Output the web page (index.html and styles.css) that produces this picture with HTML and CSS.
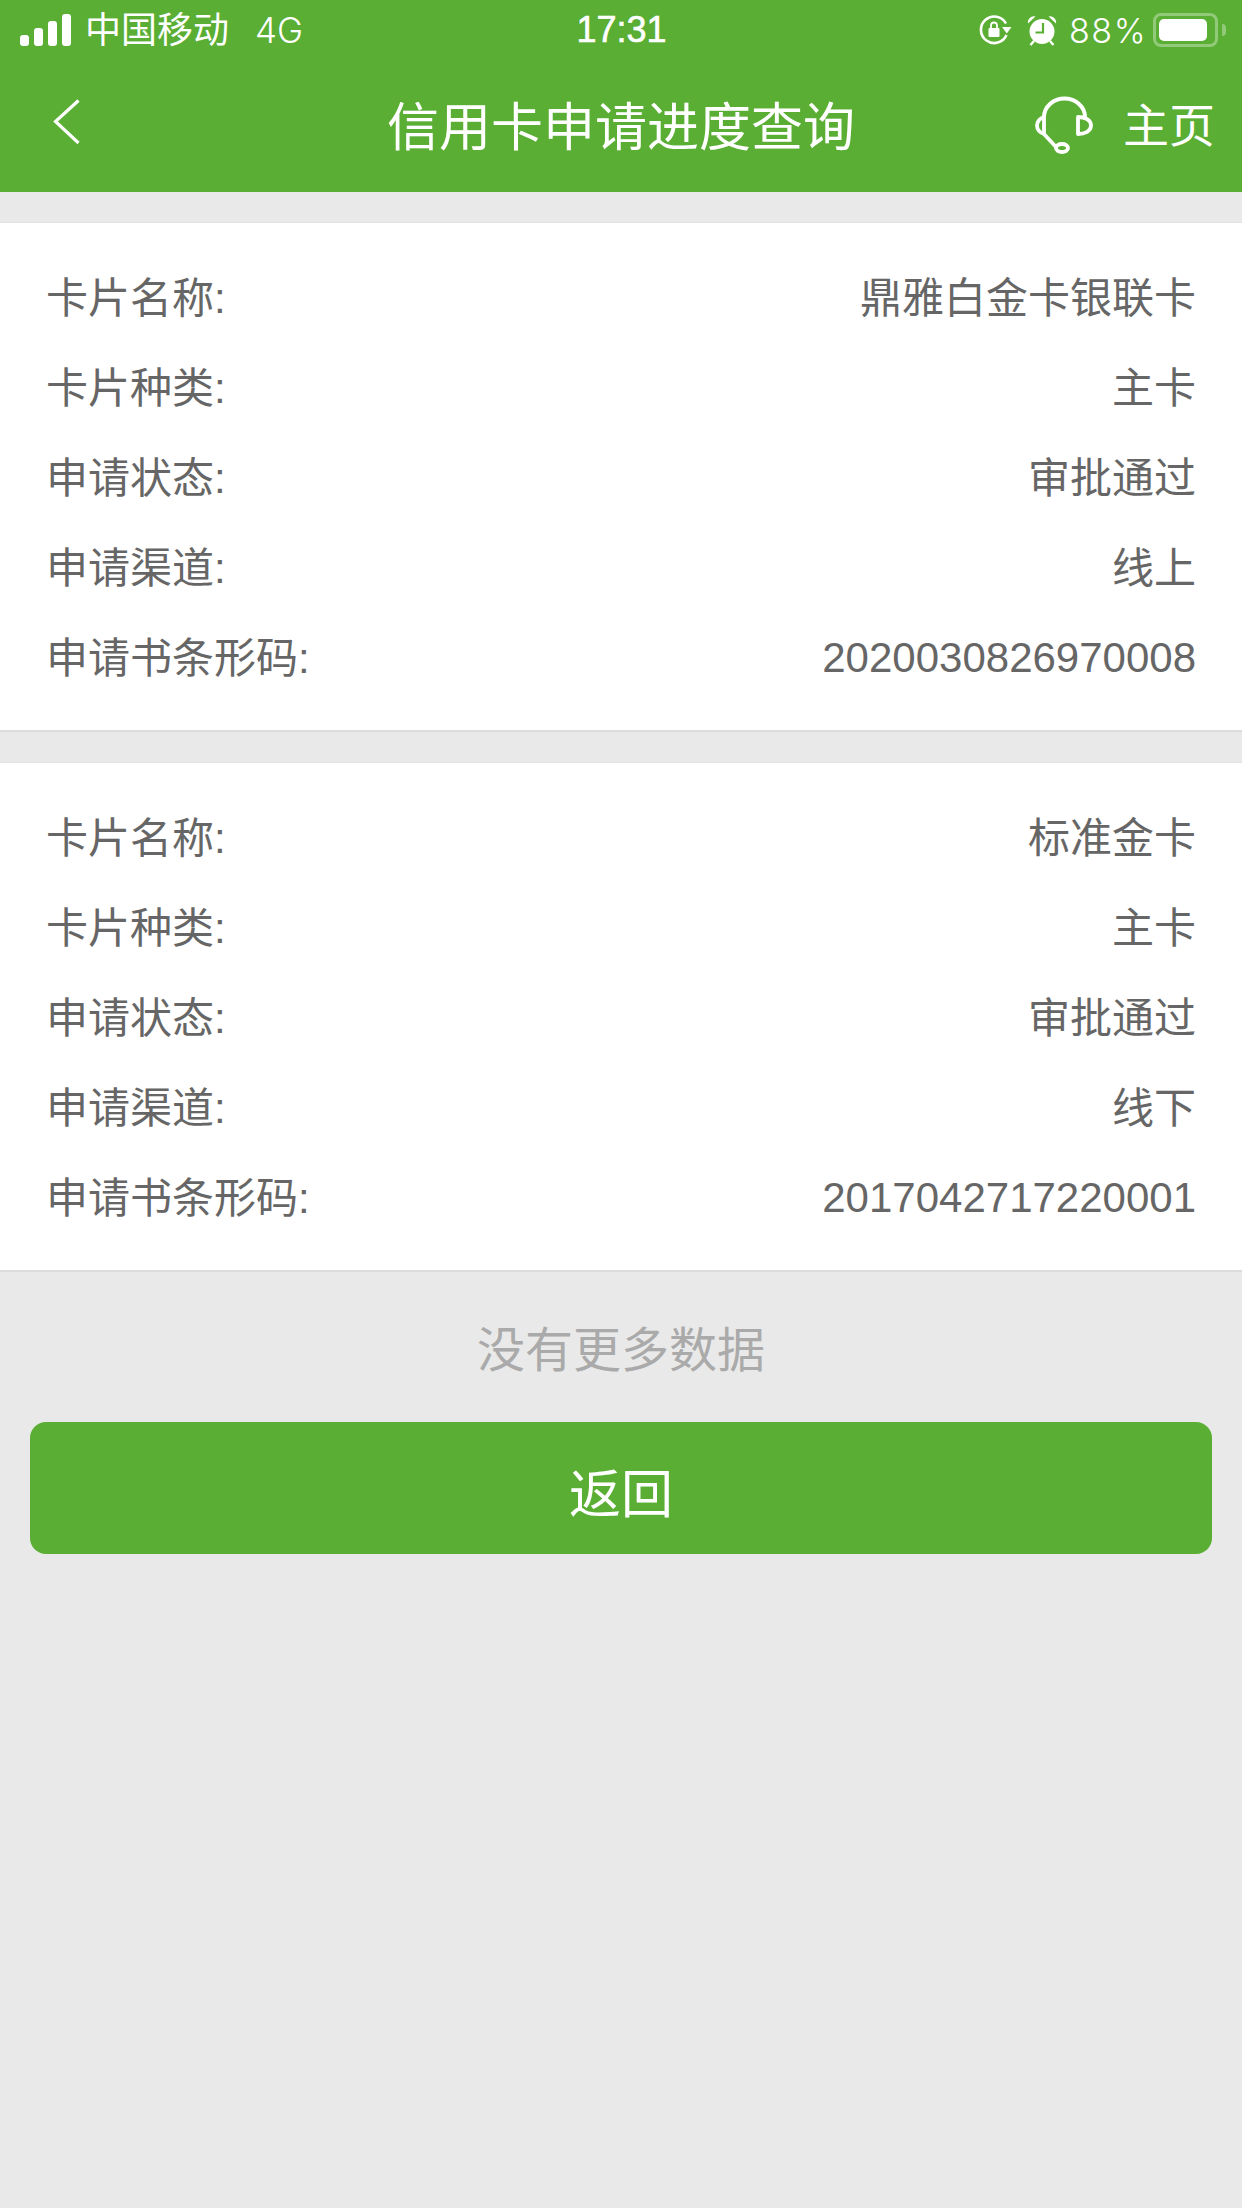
FILE: index.html

```html
<!DOCTYPE html>
<html lang="zh-CN">
<head>
  <meta charset="UTF-8" />
  <meta name="viewport" content="width=device-width, initial-scale=1.0"/>
  <title>信用卡申请进度查询</title>
  <link rel="stylesheet" href="styles.css">
</head>
<body>
  <header class="top">
    <div class="status">
      <div class="status-left">
        <svg class="signal" width="54" height="32" viewBox="0 0 54 32">
          <rect x="0" y="21" width="9" height="11" rx="3"/>
          <rect x="14" y="14" width="9" height="18" rx="3"/>
          <rect x="28" y="7" width="9" height="25" rx="3"/>
          <rect x="42" y="0" width="9" height="32" rx="3"/>
        </svg>
        <span class="carrier">中国移动</span>
        <span class="net">4G</span>
      </div>
      <div class="clock">17:31</div>
      <div class="status-right">
        <svg class="lock" width="33" height="30" viewBox="0 0 33 30">
          <path d="M27 8.500A13.300 13.300 0 1 0 27.500 20" fill="none" stroke="#fff" stroke-width="2.600"/>
          <path d="M23 12h9.500l-4.700 6.500z" fill="#fff"/>
          <rect x="9.500" y="13" width="11" height="9" rx="1" fill="#fff"/>
          <path d="M12 13v-2.500a3 3 0 0 1 6 0V13" fill="none" stroke="#fff" stroke-width="1.800"/>
        </svg>
        <svg class="alarm" width="30" height="31" viewBox="0 0 30 31">
          <circle cx="15" cy="16.500" r="12.500" fill="#fff"/>
          <path d="M1 8.500a6 6 0 0 1 7.500-7zM29 8.500a6 6 0 0 0-7.500-7z" fill="#fff"/>
          <path d="M7 26l-3.500 4M23 26l3.500 4" stroke="#fff" stroke-width="2.400"/>
          <path d="M16 8v9.500H8.500" fill="none" stroke="#59ae33" stroke-width="2.200"/>
        </svg>
        <span class="pct">88%</span>
        <div class="battery"><div class="battery-fill"></div></div>
        <div class="battery-tip"></div>
      </div>
    </div>
    <nav class="nav">
      <a class="back">
        <svg width="30" height="48" viewBox="0 0 30 48">
          <path d="M26.500 2.500L3.500 23.500 26.500 45" fill="none" stroke="#fff" stroke-width="3.200"/>
        </svg>
      </a>
      <h1 class="title">信用卡申请进度查询</h1>
      <div class="nav-right">
        <svg class="headset" width="60" height="60" viewBox="0 0 60 60">
          <path d="M9 21A20.500 18.500 0 0 1 50 21" fill="none" stroke="#fff" stroke-width="4"/>
          <path d="M9 21C4.500 22 2 26 2 29.500S4.500 37 9 38z" fill="none" stroke="#fff" stroke-width="3.800" stroke-linejoin="round"/>
          <path d="M43 21C50 21 56 24 56 29.500S50 38 43 38z" fill="none" stroke="#fff" stroke-width="3.800" stroke-linejoin="round"/>
          <path d="M9 38L21 51" fill="none" stroke="#fff" stroke-width="3.800"/>
          <ellipse cx="27" cy="52" rx="6" ry="4" fill="none" stroke="#fff" stroke-width="3.800"/>
        </svg>
        <span class="home">主页</span>
      </div>
    </nav>
  </header>

  <main>
    <section class="card">
      <div class="row"><span>卡片名称:</span><span>鼎雅白金卡银联卡</span></div>
      <div class="row"><span>卡片种类:</span><span>主卡</span></div>
      <div class="row"><span>申请状态:</span><span>审批通过</span></div>
      <div class="row"><span>申请渠道:</span><span>线上</span></div>
      <div class="row"><span>申请书条形码:</span><span class="num">2020030826970008</span></div>
    </section>
    <section class="card">
      <div class="row"><span>卡片名称:</span><span>标准金卡</span></div>
      <div class="row"><span>卡片种类:</span><span>主卡</span></div>
      <div class="row"><span>申请状态:</span><span>审批通过</span></div>
      <div class="row"><span>申请渠道:</span><span>线下</span></div>
      <div class="row"><span>申请书条形码:</span><span class="num">2017042717220001</span></div>
    </section>
    <div class="no-more">没有更多数据</div>
    <button class="back-btn">返回</button>
  </main>
</body>
</html>
```

FILE: styles.css

```css
* {
  box-sizing: border-box;
}
html, body {
  height: 100%;
}
body {
  margin: 0;
  background-color: #e9e9e9;
  font-family: "Liberation Sans", "Noto Sans CJK SC", sans-serif;
  color: #666;
  overflow: hidden;
}
.top {
  height: 192px;
  background-color: #59ae33;
  color: #fff;
}
.status {
  height: 60px;
  display: grid;
  grid-template-columns: 1fr auto 1fr;
  align-items: center;
  padding: 0 16px 0 20px;
}
.status-left {
  display: flex;
  align-items: center;
}
.status-left svg rect {
  fill: #fff;
}
.carrier {
  font-size: 36px;
  font-weight: 400;
  margin-left: 11px;
  padding-bottom: 6px;
}
.net {
  font-family: Inter, sans-serif;
  font-size: 35px;
  font-weight: 300;
  margin-left: 26px;
}
.clock {
  font-size: 36px;
  -webkit-text-stroke: 0.6px #fff;
  margin-right: 3px;
}
.status-right {
  display: flex;
  align-items: center;
  justify-content: flex-end;
}
.alarm {
  margin-left: 15px;
}
.pct {
  font-family: Inter, sans-serif;
  font-size: 34px;
  font-weight: 300;
  letter-spacing: 1.5px;
  margin-left: 12px;
}
.battery {
  width: 65px;
  height: 34px;
  margin-left: 6px;
  padding: 3px;
  border: 3px solid rgba(255, 255, 255, 0.35);
  border-radius: 8px;
}
.battery-fill {
  width: 48px;
  height: 100%;
  background-color: #fff;
  border-radius: 5px;
}
.battery-tip {
  width: 4px;
  height: 12px;
  margin-left: 4px;
  background-color: rgba(255, 255, 255, 0.35);
  border-radius: 0 4px 4px 0;
}
.nav {
  height: 132px;
  display: grid;
  grid-template-columns: 1fr auto 1fr;
  align-items: center;
  padding: 0 27px;
}
.back {
  display: flex;
  margin-top: -8px;
  margin-left: 25px;
}
.title {
  margin: 0;
  font-size: 52px;
  font-weight: 400;
  margin-top: -6px;
}
.nav-right {
  display: flex;
  align-items: center;
  justify-content: flex-end;
}
.headset {
  margin-right: 28px;
}
.home {
  font-size: 46px;
  font-weight: 400;
  padding-bottom: 8px;
}
.card {
  margin-top: 30px;
  padding: 30px 46px 27px 46px;
  background-color: #fff;
  border-top: 1px solid #e2e2e2;
  border-bottom: 2px solid #dcdcdc;
}
.row {
  height: 90px;
  display: flex;
  align-items: center;
  justify-content: space-between;
  font-size: 42px;
  font-weight: 400;
  color: #666;
}
.row span {
  padding-bottom: 8px;
}
.row .num {
  padding-bottom: 0;
}
.no-more {
  height: 118px;
  margin-top: 16px;
  padding-top: 8px;
  text-align: center;
  line-height: 110px;
  font-size: 48px;
  font-weight: 400;
  color: #aaa;
}
.back-btn {
  display: block;
  width: 1182px;
  height: 132px;
  margin: 16px 30px 0;
  padding: 4px 0 0;
  border: none;
  border-radius: 16px;
  background-color: #59ae33;
  color: #fff;
  font-family: inherit;
  font-size: 52px;
  font-weight: 400;
}
```
